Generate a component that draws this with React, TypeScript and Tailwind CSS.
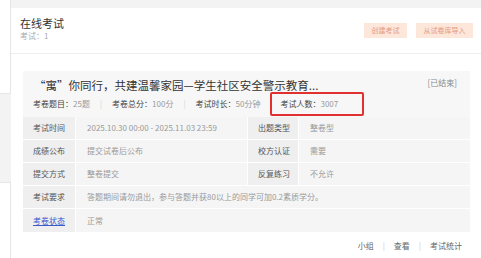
import React from 'react'

const font = { fontFamily: '"Noto Sans CJK SC", "Noto Sans", sans-serif' }

function Stat({ label, value }: { label: string; value: string }) {
  return (
    <span className="whitespace-nowrap">
      <span className="text-[#444]">{label}</span>
      <span className="text-[#999]">{value}</span>
    </span>
  )
}

function Sep() {
  return <span className="mx-[10px] text-[#d5d5d5]">|</span>
}

function Label({ children, className = '' }: { children: React.ReactNode; className?: string }) {
  return (
    <div className={`bg-[#efefef] flex items-center pl-[10px] text-[#555] border-r border-white ${className}`}>
      {children}
    </div>
  )
}

function Value({ children, className = '' }: { children: React.ReactNode; className?: string }) {
  return (
    <div className={`bg-[#f5f5f5] flex items-center pl-[11px] text-[#9a9a9a] whitespace-nowrap ${className}`}>
      {children}
    </div>
  )
}

export default function App() {
  return (
    <div className="w-[481px] h-[258px] bg-[#f3f3f3] flex overflow-hidden" style={font}>
      {/* sidebar edge */}
      <div className="w-[11px] flex flex-col justify-between">
        <div className="h-[94px] bg-white border-r border-b border-[#e6e6e6]" />
        <div className="h-[76px] bg-white border-r border-t border-[#e6e6e6]" />
      </div>

      <div className="flex-1 pt-[8px] flex flex-col">
        <div className="flex-1 bg-white flex flex-col">
          {/* header */}
          <div className="h-[46px] flex justify-between items-start pl-[9px] pr-[8px] pt-[9px] border-b border-[#eeeeee]">
            <div>
              <div className="text-[11px] leading-[13px] text-[#333]">在线考试</div>
              <div className="text-[8px] leading-[9px] mt-[1px] text-[#aaa]">考试：1</div>
            </div>
            <div className="flex gap-[9px] mt-[6px] h-[15px]">
              <div className="w-[43px] bg-[#fde6da] text-[#e59a7f] text-[7px] flex items-center justify-center">创建考试</div>
              <div className="w-[57px] bg-[#fde6da] text-[#e59a7f] text-[7px] flex items-center justify-center">从试卷库导入</div>
            </div>
          </div>

          {/* exam card */}
          <div className="mt-[17px] ml-[12px] mr-[11px] bg-[#f7f7f7] flex flex-col">
            <div className="flex justify-between items-center pl-[11px] pr-[13px] pt-[6px] h-[22px]">
              <div className="text-[11.5px] leading-[14px] text-[#333] whitespace-nowrap">“寓”你同行，共建温馨家园—学生社区安全警示教育...</div>
              <div className="text-[8px] text-[#888] -mt-[4px]">[已结束]</div>
            </div>
            <div className="flex items-center pl-[10px] h-[24px] mt-[-1px] text-[8px]">
              <Stat label="考卷题目：" value="25题" />
              <Sep />
              <Stat label="考卷总分：" value="100分" />
              <Sep />
              <Stat label="考试时长：" value="50分钟" />
              <div className="ml-[10px] h-[24px] w-[94px] border-2 border-[#e0312f] rounded-[2px] flex items-center pl-[8px]">
                <Stat label="考试人数：" value="3007" />
              </div>
            </div>

            <div className="mt-[1px] text-[8px] flex flex-col">
              <div className="grid grid-cols-[53px_172px_51px_1fr] h-[23px] border-b border-white">
                <Label>考试时间</Label>
                <Value className="border-r border-white">2025.10.30 00:00 - 2025.11.03 23:59</Value>
                <Label>出题类型</Label>
                <Value>整卷型</Value>
              </div>
              <div className="grid grid-cols-[53px_172px_51px_1fr] h-[23px] border-b border-white">
                <Label>成绩公布</Label>
                <Value className="border-r border-white">提交试卷后公布</Value>
                <Label>校方认证</Label>
                <Value>需要</Value>
              </div>
              <div className="grid grid-cols-[53px_172px_51px_1fr] h-[23px] border-b border-white">
                <Label>提交方式</Label>
                <Value className="border-r border-white">整卷提交</Value>
                <Label>反复练习</Label>
                <Value>不允许</Value>
              </div>
              <div className="grid grid-cols-[53px_1fr] h-[23px] border-b border-white">
                <Label>考试要求</Label>
                <Value>答题期间请勿退出，参与答题并获80以上的同学可加0.2素质学分。</Value>
              </div>
              <div className="grid grid-cols-[53px_1fr] h-[23px]">
                <Label>
                  <span className="text-[#3b5bcc] underline">考卷状态</span>
                </Label>
                <Value>正常</Value>
              </div>
            </div>
          </div>

          {/* footer links */}
          <div className="flex justify-end items-center pr-[19px] mt-[8px] text-[8px] text-[#666]">
            <span>小组</span>
            <span className="mx-[9px] text-[#ccc]">|</span>
            <span>查看</span>
            <span className="mx-[9px] text-[#ccc]">|</span>
            <span>考试统计</span>
          </div>
        </div>
      </div>
    </div>
  )
}
